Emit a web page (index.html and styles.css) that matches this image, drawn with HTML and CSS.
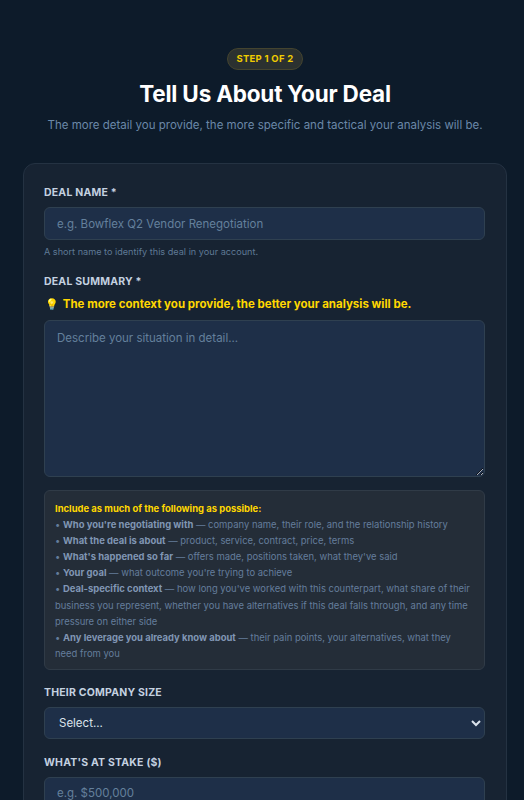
FILE: index.html
```html
<!DOCTYPE html>
<html lang="en">
<head>
  <meta charset="UTF-8">
  <meta name="viewport" content="width=device-width, initial-scale=1">
  <title>Tell Us About Your Deal</title>
  <link rel="stylesheet" href="styles.css">
</head>
<body>

  <div class="page">
    <div class="intro">
      <span class="step-badge">STEP 1 OF 2</span>
      <h1>Tell Us About Your Deal</h1>
      <p>The more detail you provide, the more specific and tactical your analysis will be.</p>
    </div>

    <form class="card">
      <div class="field">
        <label for="deal-name">Deal Name *</label>
        <input id="deal-name" type="text" placeholder="e.g. Bowflex Q2 Vendor Renegotiation">
        <div class="hint">A short name to identify this deal in your account.</div>
      </div>

      <div class="field">
        <label for="deal-summary">Deal Summary *</label>
        <div class="context-note"><span class="bulb">💡</span> The more context you provide, the better your analysis will be.</div>
        <textarea id="deal-summary" placeholder="Describe your situation in detail..."></textarea>
        <div class="include-box">
          <div class="include-title">Include as much of the following as possible:</div>
          • <strong>Who you're negotiating with</strong> — company name, their role, and the relationship history<br>
          • <strong>What the deal is about</strong> — product, service, contract, price, terms<br>
          • <strong>What's happened so far</strong> — offers made, positions taken, what they've said<br>
          • <strong>Your goal</strong> — what outcome you're trying to achieve<br>
          • <strong>Deal-specific context</strong> — how long you've worked with this counterpart, what share of their business you represent, whether you have alternatives if this deal falls through, and any time pressure on either side<br>
          • <strong>Any leverage you already know about</strong> — their pain points, your alternatives, what they need from you
        </div>
      </div>

      <div class="field">
        <label for="company-size">Their Company Size</label>
        <select id="company-size">
          <option>Select...</option>
          <option>Small</option>
          <option>Mid-size</option>
          <option>Enterprise</option>
        </select>
      </div>

      <div class="field">
        <label for="stake">What's At Stake ($)</label>
        <input id="stake" type="text" placeholder="e.g. $500,000">
      </div>
    </form>
  </div>

</body>
</html>
```

FILE: styles.css
```css
* {
  box-sizing: border-box;
}

html, body {
  height: 800px;
  overflow: hidden;
}

body {
  margin: 0;
  background-color: #0d1b2a;
  color: #e2e8f0;
  font-family: Inter, Arial, sans-serif;
  color-scheme: dark;
}

.page {
  padding: 46px 17px 0 23px;
}

.intro {
  text-align: center;
  margin-bottom: 29px;
}

.step-badge {
  display: inline-block;
  padding: 4px 8.5px;
  border: 1px solid #44442f;
  border-radius: 20px;
  background-color: #2b3130;
  color: #f0cc00;
  font-size: 9.5px;
  font-weight: 700;
  line-height: 12px;
  letter-spacing: 0.25px;
}

h1 {
  margin: 10px 0 9px;
  color: #ffffff;
  font-size: 22.5px;
  font-weight: 700;
  line-height: 27px;
  letter-spacing: -0.2px;
}

.intro p {
  margin: 0;
  color: #6b88a8;
  font-size: 11.5px;
  line-height: 18px;
}

.card {
  padding: 22px 21px 0 20px;
  height: 700px;
  background-color: #172332;
  border: 1px solid #243242;
  border-radius: 12px;
}

.field {
  margin-bottom: 17px;
}

label {
  display: block;
  margin-bottom: 7px;
  color: #c4d1e0;
  font-size: 10.5px;
  font-weight: 700;
  line-height: 14px;
  letter-spacing: 0.2px;
  text-transform: uppercase;
}

input, textarea, select {
  display: block;
  width: 100%;
  padding: 0 12px;
  background-color: #1e2f48;
  border: 1px solid #2f4050;
  border-radius: 6px;
  color: #dbe3ec;
  font-family: Inter, Arial, sans-serif;
  font-size: 11.5px;
}

input {
  height: 33px;
}

textarea {
  height: 157px;
  padding-top: 9px;
  line-height: 16px;
  outline: none;
}

select {
  height: 32px;
  padding-left: 10px;
}

input::placeholder, textarea::placeholder {
  color: #64809c;
  opacity: 1;
}

.hint {
  margin-top: 5px;
  margin-bottom: 1.5px;
  color: #5f7a96;
  font-size: 9.15px;
  line-height: 13px;
}

.context-note {
  margin-bottom: 8px;
  color: #ffd700;
  font-size: 11.5px;
  font-weight: 700;
  line-height: 16px;
}

.bulb {
  margin: 0 1px;
  font-size: 11px;
}

.include-box {
  margin-top: 13px;
  margin-bottom: -1px;
  padding: 10px 10px 7px;
  background-color: #242d38;
  border: 1px solid #303b47;
  border-radius: 6px;
  color: #647d9c;
  font-size: 9.45px;
  line-height: 16.1px;
}

.include-box strong {
  color: #8096b4;
}

.include-title {
  color: #ffd700;
  font-weight: 700;
}
```
